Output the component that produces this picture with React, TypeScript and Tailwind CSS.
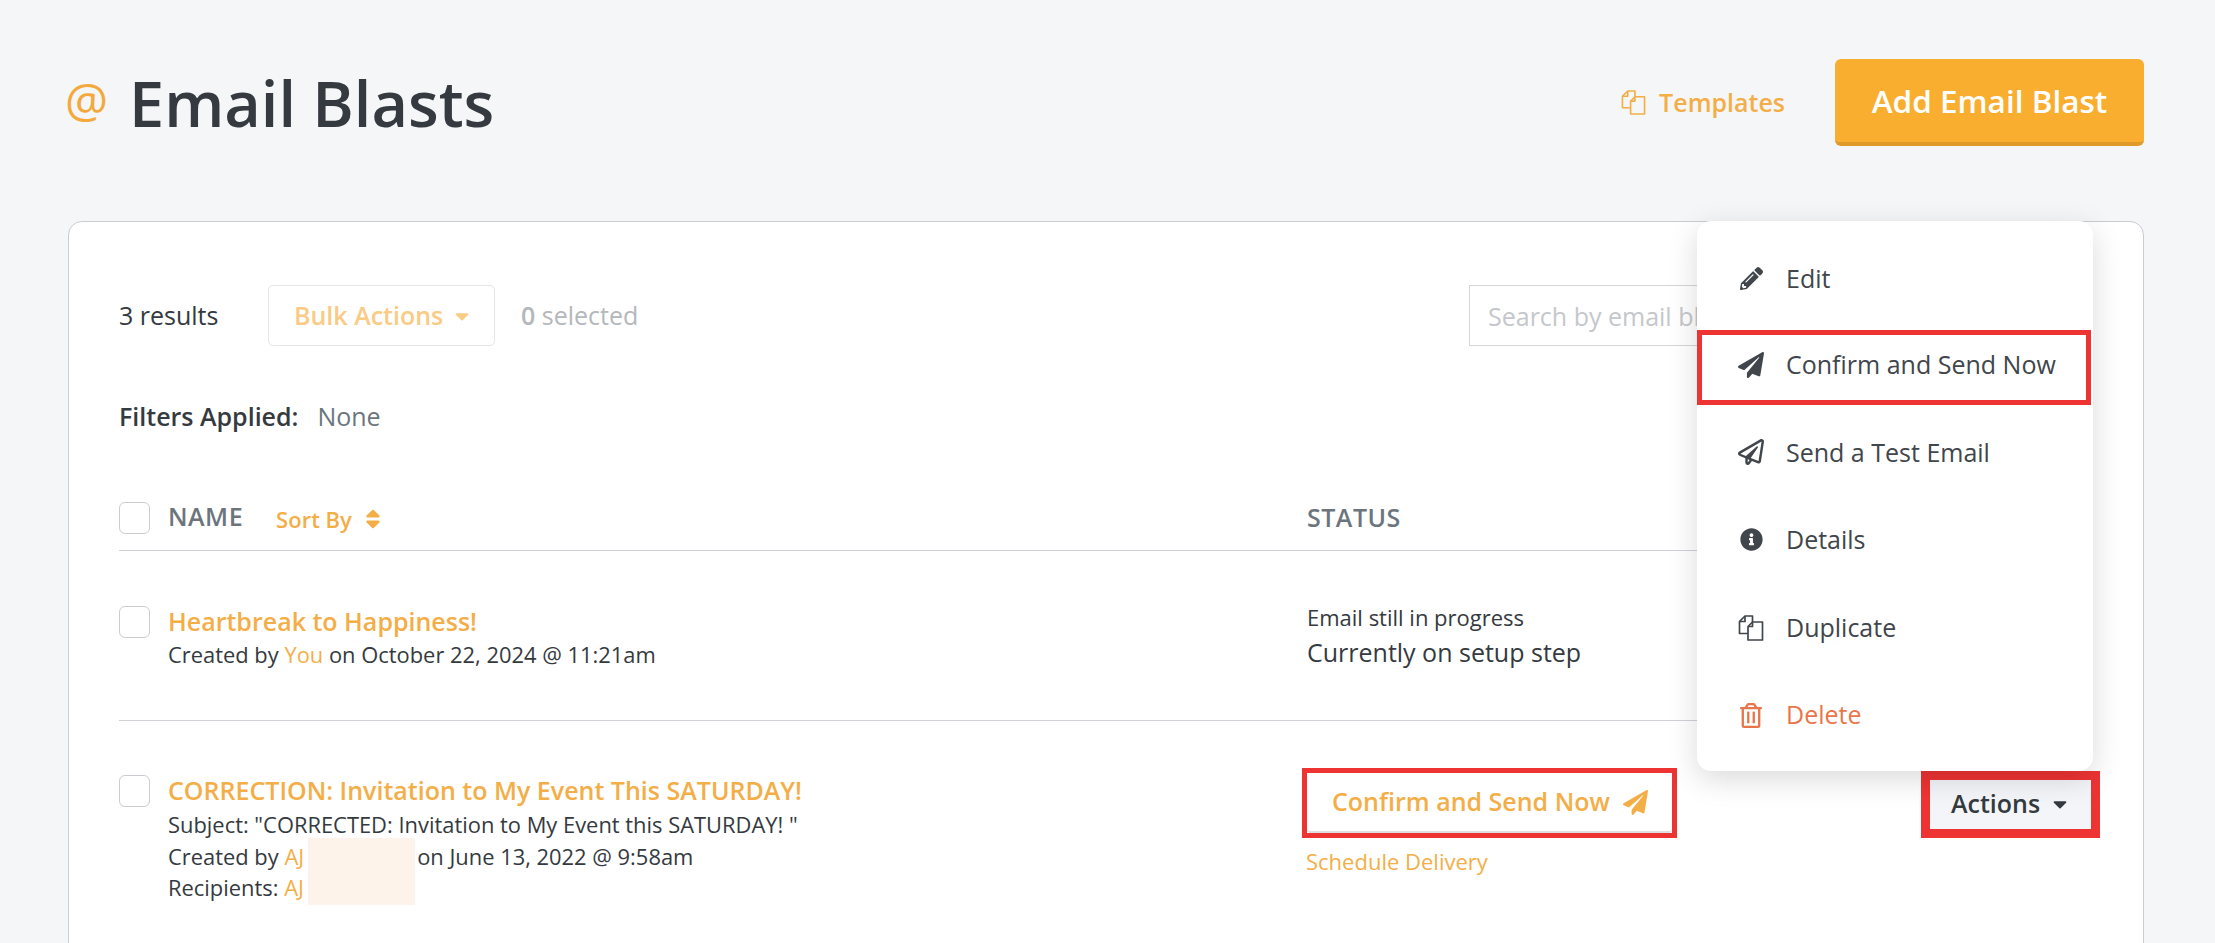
import { ElementType } from 'react';
import {
	FaCaretDown,
	FaInfoCircle,
	FaPaperPlane,
	FaPencilAlt,
	FaRegPaperPlane,
	FaRegTrashAlt,
	FaSort,
} from 'react-icons/fa';

function CopyIcon({ className }: { className?: string }) {
	return (
		<svg viewBox="0 0 26 26" fill="none" stroke="currentColor" strokeWidth="1.7" strokeLinejoin="round" className={className}>
			<path d="M10 18.5H1.5V6.5L7 1H14.5V7" />
			<path d="M7 1V6.5H1.5" />
			<path d="M14.5 7H24.5V25H10V11.5Z" />
			<path d="M14.5 7V11.5H10" />
		</svg>
	);
}

type MenuItemProps = {
	Icon: ElementType;
	title: string;
	iconClass?: string;
	className?: string;
};

function MenuItem({ Icon, title, iconClass = 'w-[26px] h-[26px]', className = 'text-[#40464c]' }: MenuItemProps) {
	return (
		<div className={`flex h-[87.6px] items-center pl-[42px] text-[25px] ${className}`}>
			<span className="flex w-[24px] justify-center">
				<Icon className={`shrink-0 ${iconClass}`} />
			</span>
			<span className="ml-[23px]">{title}</span>
		</div>
	);
}

function Checkbox() {
	return <div className="h-[32px] w-[31px] shrink-0 rounded-[6px] border border-[#c9ccd1] bg-white" />;
}

export default function App() {
	return (
		<div className="h-[943px] overflow-hidden bg-[#f4f6f8] pl-[68px] pr-[71px] pt-[59px] font-['Open_Sans',sans-serif] text-[#343a40]">
			<header className="flex h-[87px] items-center">
				<span className="ml-[-3px] mt-[-6px] text-[48px] leading-none text-[#f4a93c]">@</span>
				<h1 className="ml-[21px] text-[63px] font-semibold leading-none text-[#343a40]">Email Blasts</h1>
				<a className="ml-auto flex items-center text-[25px] font-semibold text-[#f4ae47]">
					<CopyIcon className="h-[25px] w-[25px]" />
					<span className="ml-[13px]">Templates</span>
				</a>
				<button className="ml-[50px] h-[87px] w-[309px] rounded-[6px] border-b-[4px] border-[#df9a2a] bg-[#f9ae2f] text-[31.5px] font-semibold text-white">
					Add Email Blast
				</button>
			</header>

			<main className="relative mt-[75px] h-[760px] rounded-[14px] border border-[#c9ccd1] bg-white px-[50px] pt-[63px]">
				<div className="flex h-[61px] items-center text-[25px]">
					<span className="w-[149px]">3 results</span>
					<div className="flex h-[61px] w-[227px] items-center rounded-[5px] border border-[#e3e5e8] pl-[25px] font-semibold text-[#f9cb85]">
						Bulk Actions
						<FaCaretDown className="ml-[8px] h-[22px] w-[22px]" />
					</div>
					<span className="ml-[26px] text-[#b4b7bb]">
						<b className="font-semibold">0</b> selected
					</span>
					<input
						placeholder="Search by email blast name"
						className="ml-auto h-[61px] w-[624px] border border-[#d3d5d8] pl-[18px] placeholder:text-[#c4c7cb]"
					/>
				</div>

				<div className="mt-[53px] flex text-[25px] leading-[34px]">
					<span className="font-semibold">Filters Applied:</span>
					<span className="ml-[19px] text-[#6c757d]">None</span>
				</div>

				<div className="mt-[69px] flex h-[49px] items-start border-b border-[#cfd2d6]">
					<Checkbox />
					<div className="ml-[18px] flex w-[1139px]">
						<span className="mt-[-1px] text-[25px] font-semibold leading-[30px] tracking-[0.5px] text-[#6c757d]">NAME</span>
						<span className="ml-[33px] mt-[2px] flex items-center text-[22px] font-semibold leading-[30px] text-[#f4ae47]">
							Sort By
							<FaSort className="ml-[9px] h-[24px] w-[24px]" />
						</span>
					</div>
					<span className="text-[25px] font-semibold leading-[30px] tracking-[0.5px] text-[#6c757d]">STATUS</span>
				</div>

				<div className="flex h-[170px] border-b border-[#cfd2d6] pt-[55px]">
					<Checkbox />
					<div className="ml-[18px] w-[1139px]">
						<div className="text-[25px] font-semibold leading-[30px] text-[#f4ae47]">Heartbreak to Happiness!</div>
						<div className="mt-[4px] text-[21.9px] leading-[30px]">
							Created by <span className="text-[#f4ae47]">You</span> on October 22, 2024 @ 11:21am
						</div>
					</div>
					<div className="mt-[-4px]">
						<div className="text-[22px] leading-[30px]">Email still in progress</div>
						<div className="mt-[5px] text-[25px] leading-[30px]">Currently on setup step</div>
					</div>
				</div>

				<div className="flex pt-[47px]">
					<div className="mt-[7px]">
						<Checkbox />
					</div>
					<div className="ml-[18px] mt-[7px] w-[1134px]">
						<div className="text-[25px] font-semibold leading-[30px] text-[#f4ae47]">
							CORRECTION: Invitation to My Event This SATURDAY!
						</div>
						<div className="mt-[4px] text-[21.9px] leading-[32px]">Subject: "CORRECTED: Invitation to My Event this SATURDAY! "</div>
						<div className="text-[21.9px] leading-[32px]">
							Created by <span className="text-[#f4ae47]">AJ</span>
							<span className="relative inline-block w-[113px]">
								<span className="absolute bottom-[-40px] left-[4px] h-[67px] w-[107px] bg-[#fef3ea]" />
							</span>
							on June 13, 2022 @ 9:58am
						</div>
						<div className="text-[21.9px] leading-[30px]">
							Recipients: <span className="text-[#f4ae47]">AJ</span>
						</div>
					</div>
					<div>
						<div className="h-[70px] w-[375px] border-[5px] border-[#ee3433]">
							<div className="flex h-[60px] items-center rounded-b-[4px] border-b-2 border-[#dcdee1] pl-[25px] text-[25px] font-semibold text-[#f4ae47]">
								Confirm and Send Now
								<FaPaperPlane className="ml-[13px] h-[25px] w-[25px]" />
							</div>
						</div>
						<div className="ml-[4px] mt-[8px] text-[22px] leading-[30px] text-[#f4ae47]">Schedule Delivery</div>
					</div>
					<div className="ml-auto mr-[-7px] mt-[3px] flex h-[67px] w-[179px] items-center border-[9px] border-[#ee3433] bg-[#f3f5f8] pb-[2px] pl-[21px] text-[25px] font-semibold">
						Actions
						<FaCaretDown className="ml-[9px] h-[22px] w-[22px]" />
					</div>
				</div>

				<div className="absolute left-[1628px] top-[-1px] h-[550px] w-[396px] rounded-[14px] bg-white py-[14px] shadow-[0_8px_30px_rgba(0,0,0,0.15)]">
					<MenuItem Icon={FaPencilAlt} title="Edit" iconClass="w-[23px] h-[23px]" />
					<div className="mb-[4px] mt-[7px] w-[394px] border-[5px] border-[#ee3433] [&>div]:ml-[-5px] [&>div]:h-[65px] [&>div]:pb-[5px]">
						<MenuItem Icon={FaPaperPlane} title="Confirm and Send Now" />
					</div>
					<MenuItem Icon={FaRegPaperPlane} title="Send a Test Email" />
					<MenuItem Icon={FaInfoCircle} title="Details" iconClass="w-[23px] h-[23px]" />
					<MenuItem Icon={CopyIcon} title="Duplicate" />
					<MenuItem Icon={FaRegTrashAlt} title="Delete" iconClass="w-[22px] h-[25px]" className="text-[#e9764a]" />
				</div>
			</main>
		</div>
	);
}
